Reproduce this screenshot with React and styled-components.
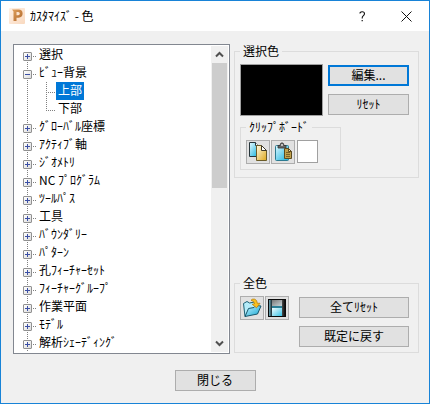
import React, { useState } from 'react';
import styled, { createGlobalStyle, css } from 'styled-components';

const GlobalStyle = createGlobalStyle`
  * {
    box-sizing: border-box;
  }
  body {
    margin: 0;
    background: #f0f0f0;
  }
  body, button {
    font-family: "Noto Sans CJK JP", "Noto Sans", sans-serif;
    font-size: 12px;
    color: #000;
  }
`;

const Dialog = styled.div`
  display: flex;
  flex-direction: column;
  min-height: 100vh;
  border: 1px solid #1883d7;
  background: #f0f0f0;
`;

const TitleBar = styled.header`
  display: flex;
  align-items: center;
  height: 30px;
  padding: 0 2px 0 8px;
  background: #fff;
`;

const Title = styled.h1`
  flex: 1;
  margin: 0 0 0 5px;
  font-size: 12px;
  font-weight: 400;
  line-height: 18px;
`;

const TitleButton = styled.button`
  display: flex;
  align-items: center;
  justify-content: center;
  width: 46px;
  height: 28px;
  padding: 0;
  border: none;
  background: transparent;

  &:last-child {
    width: 42px;
  }
  &:hover {
    background: #e5e5e5;
  }
`;

const Body = styled.main`
  display: grid;
  grid-template-columns: minmax(0, 217fr) minmax(185px, 185fr);
  column-gap: 4px;
  padding: 13px 10px 0 12px;
`;

const TreePanel = styled.div`
  display: flex;
  padding: 1px;
  border: 1px solid #828790;
  background: #fff;
`;

const TreeList = styled.ul`
  flex: 1;
  margin: 0;
  padding: 0 0 0 8px;
  list-style: none;
`;

const rail = css`
  background-image:
    repeating-linear-gradient(to bottom, #808080 0 1px, transparent 1px 2px),
    repeating-linear-gradient(to right, #808080 0 1px, transparent 1px 2px);
  background-repeat: no-repeat;
  background-position: 4px ${props => (props.$first ? '10px' : '0')}, 4px 10px;
  background-size: 1px ${props => (props.$last ? '10px' : '18px')}, 9px 1px;
`;

const ChildList = styled.ul`
  margin: 0;
  padding: 0 0 0 19px;
  list-style: none;
  background: repeating-linear-gradient(to bottom, #808080 0 1px, transparent 1px 2px) 4px 0 / 1px 100% no-repeat;
`;

const Row = styled.div`
  display: flex;
  height: 18px;
`;

const Branch = styled.span`
  width: 14px;
  height: 18px;
  padding-top: 6px;
  ${rail}
`;

const Expander = styled.button`
  display: block;
  width: 9px;
  height: 9px;
  padding: 0;
  border: 1px solid #919191;
  border-radius: 1px;
  background:
    linear-gradient(#3b4fa5, #3b4fa5) center / 5px 1px no-repeat,
    ${props => (props.$open ? '' : 'linear-gradient(#3b4fa5, #3b4fa5) center / 1px 5px no-repeat,')}
    linear-gradient(135deg, #fff, #dcdcdc);
`;

const Label = styled.span`
  padding: 0 2px 2px;
  line-height: 16px;
  white-space: nowrap;
  cursor: default;
  color: ${props => (props.$selected ? '#fff' : '#000')};
  background: ${props => (props.$selected ? '#0078d7' : 'transparent')};
`;

const ScrollBar = styled.div`
  display: flex;
  flex-direction: column;
  width: 17px;
  background: #f0f0f0;
`;

const ScrollButton = styled.button`
  display: flex;
  align-items: center;
  justify-content: center;
  height: 17px;
  padding: 0;
  border: none;
  background: transparent;
`;

const Track = styled.div`
  flex: 1;
`;

const Thumb = styled.div`
  width: 15px;
  height: 46%;
  margin: 0 1px;
  background: #cdcdcd;
`;

const Side = styled.div`
  display: flex;
  flex-direction: column;
  justify-content: space-between;
  padding-bottom: 1px;
`;

const Group = styled.fieldset`
  min-width: 0;
  margin: 0;
  padding: 6px ${props => (props.$inner ? '5px' : '9px')} 5px 5px;
  border: 1px solid #dcdcdc;
`;

const Legend = styled.legend`
  padding: 0 3px;
  line-height: 14px;
`;

const SelectedGrid = styled.div`
  display: grid;
  grid-template-columns: 83fr 81fr;
  column-gap: 5px;
`;

const Swatch = styled.div`
  height: 52px;
  border: 1px solid #a0a0a0;
  background: #000;
`;

const Stack = styled.div`
  display: flex;
  flex: 1;
  flex-direction: column;
  gap: 8px;
  padding-top: 1px;
`;

const PushButton = styled.button`
  height: 21px;
  padding: 0 8px 2px;
  border: ${props => (props.$primary ? '2px solid #0078d7' : '1px solid #adadad')};
  background: #e1e1e1;
  line-height: 16px;
  white-space: nowrap;

  &:hover {
    background: #e5f1fb;
  }
`;

const ClipboardRow = styled.div`
  display: flex;
  width: 101px;
  margin: 4px 0 2px;

  ${Group} {
    flex: 1;
  }
`;

const Tools = styled.div`
  display: flex;
  gap: 1px;
`;

const IconButton = styled.button`
  display: flex;
  align-items: center;
  justify-content: center;
  width: 24px;
  height: 24px;
  padding: 0;
  border: 1px solid #adadad;
  background: #e1e1e1;
`;

const ClipSwatch = styled.div`
  width: 21px;
  height: 23px;
  margin-left: 1px;
  border: 1px solid #a0a0a0;
  background: #fff;
`;

const AllColours = styled.div`
  display: flex;
  gap: 10px;
`;

const Footer = styled.footer`
  display: flex;
  justify-content: center;
  padding: 16px 0 12px;

  ${PushButton} {
    width: 81px;
  }
`;

const AppIcon = () => (
  <svg width="16" height="16" viewBox="0 0 16 16" aria-hidden="true">
    <defs>
      <linearGradient id="appBack" x1="0" y1="0" x2="1" y2="1">
        <stop offset="0" stopColor="#fff1e6" />
        <stop offset="1" stopColor="#f9d9bf" />
      </linearGradient>
      <linearGradient id="appMark" x1="0" y1="0" x2="1" y2="1">
        <stop offset="0" stopColor="#e0a05c" />
        <stop offset="1" stopColor="#b0682c" />
      </linearGradient>
    </defs>
    <rect width="16" height="16" rx="1" fill="url(#appBack)" />
    <path d="M3 1.5h6.5a4 4 0 0 1 0 8.2H7.5V13h-3V3.5z" fill="url(#appMark)" />
    <path d="M7.5 4h1.7a1.6 1.6 0 0 1 0 3.2H7.500z" fill="#fbe3cf" />
  </svg>
);

const CloseIcon = () => (
  <svg width="11" height="11" viewBox="0 0 11 11" aria-hidden="true">
    <path d="M.5.5l10 10M10.5.5l-10 10" stroke="#111" fill="none" />
  </svg>
);

const HelpIcon = () => (
  <svg width="7" height="11" viewBox="0 0 7 11" aria-hidden="true">
    <path d="M1 2.6V1.8Q1.8.8 3.2.8q2.3 0 2.3 2 0 1.1-1.3 2.1-1 .8-1 2.1v.4" stroke="#111" strokeWidth="1.1" fill="none" />
    <path d="M2.6 9h1.2v1.2H2.6z" fill="#111" />
  </svg>
);

const Chevron = ({ down }) => (
  <svg width="9" height="7" viewBox="0 0 9 7" aria-hidden="true">
    <path d={down ? 'M1 1.5l3.5 3.5L8 1.5' : 'M1 5.5L4.5 2 8 5.5'} stroke="#505050" strokeWidth="2" fill="none" />
  </svg>
);

const CopyIcon = () => (
  <svg width="20" height="20" viewBox="0 0 20 20" aria-hidden="true">
    <defs>
      <linearGradient id="pageBlue" x1="0" y1="0" x2="1" y2="1">
        <stop offset="0" stopColor="#e8fbff" />
        <stop offset="1" stopColor="#0fb0dc" />
      </linearGradient>
      <linearGradient id="pageGold" x1="0" y1="0" x2="1" y2="1">
        <stop offset="0" stopColor="#fffbe8" />
        <stop offset="1" stopColor="#dea81c" />
      </linearGradient>
    </defs>
    <path d="M1.5 .5h6l3 3v11h-9z" fill="url(#pageBlue)" stroke="#26343a" />
    <path d="M7.5 .5v3h3" fill="#fff" stroke="#26343a" />
    <path d="M8.5 3.5h5l5 5v10h-10z" fill="url(#pageGold)" stroke="#6b5c28" />
    <path d="M13.5 3.5v5h5z" fill="#fff" stroke="#3d3826" />
  </svg>
);

const PasteIcon = () => (
  <svg width="20" height="20" viewBox="0 0 20 20" aria-hidden="true">
    <defs>
      <linearGradient id="boardBlue" x1="0" y1="0" x2="1" y2="1">
        <stop offset="0" stopColor="#dcf8ff" />
        <stop offset="1" stopColor="#18b2de" />
      </linearGradient>
    </defs>
    <rect x="2.5" y="3.5" width="13" height="15" rx="1" fill="url(#boardBlue)" stroke="#2c7a90" />
    <path d="M5 6V3.5h2Q7.200 .8 9 .8t2 2.700h2V6z" fill="#666" stroke="#333" strokeWidth=".8" />
    <path d="M8 2.200h2v1.600H8z" fill="#ddd" />
    <path d="M11.5 6.5h4l3 3v7h-7z" fill="#c0a04c" stroke="#5a4a1f" />
    <path d="M13 10.5h4M13 12.5h4M13 14.5h4" stroke="#7a6329" />
    <path d="M15.5 6.5v3h3z" fill="#f2e3b3" stroke="#5a4a1f" />
  </svg>
);

const OpenIcon = () => (
  <svg width="20" height="20" viewBox="0 0 20 20" aria-hidden="true">
    <defs>
      <linearGradient id="folderBlue" x1="0" y1="0" x2="1" y2="1">
        <stop offset="0" stopColor="#c8f4ff" />
        <stop offset="1" stopColor="#0fa5d2" />
      </linearGradient>
    </defs>
    <path d="M3 18.500L1.500 5.500l3.500-2 2.500 1.500 5-1 2 5z" fill="#b5ecf9" stroke="#1c6075" />
    <path d="M3 18.500l3.500-8 5.500-1 2-2 5 .5-3.500 8z" fill="url(#folderBlue)" stroke="#17556a" />
    <path d="M9 2.200Q10.500.5 12.800 1.200 15.200 2 15.300 5.300H18l-3.500 4.500-4.300-3.500 2.400-.6Q12 2.800 9 2.200z" fill="#fbc01d" stroke="#b9820c" strokeWidth=".8" />
  </svg>
);

const SaveIcon = () => (
  <svg width="20" height="20" viewBox="0 0 20 20" aria-hidden="true">
    <defs>
      <linearGradient id="diskSide" x1="0" y1="0" x2="1" y2="0">
        <stop offset="0" stopColor="#7fc4d4" />
        <stop offset=".2" stopColor="#1c2a30" />
        <stop offset=".8" stopColor="#4a4a4a" />
        <stop offset="1" stopColor="#000" />
      </linearGradient>
      <linearGradient id="diskShutter" x1="0" y1="0" x2="1" y2="1">
        <stop offset="0" stopColor="#777" />
        <stop offset="1" stopColor="#c9d4d8" />
      </linearGradient>
      <linearGradient id="diskLabel" x1="0" y1="0" x2="1" y2="1">
        <stop offset="0" stopColor="#f2fdff" />
        <stop offset="1" stopColor="#38c3e6" />
      </linearGradient>
    </defs>
    <rect x="1.5" y="1.5" width="17" height="17" fill="url(#diskSide)" stroke="#0a0a0a" />
    <rect x="5" y="2" width="10" height="6" fill="url(#diskShutter)" />
    <rect x="5" y="8" width="10" height="2" fill="#2b7f96" />
    <rect x="5" y="10" width="10" height="8" fill="url(#diskLabel)" />
  </svg>
);

const nodes = [
  { name: '選択' },
  { name: 'ﾋﾞｭｰ背景', children: ['上部', '下部'] },
  { name: 'ｸﾞﾛｰﾊﾞﾙ座標' },
  { name: 'ｱｸﾃｨﾌﾞ軸' },
  { name: 'ｼﾞｵﾒﾄﾘ' },
  { name: 'NC ﾌﾟﾛｸﾞﾗﾑ' },
  { name: 'ﾂｰﾙﾊﾟｽ' },
  { name: '工具' },
  { name: 'ﾊﾞｳﾝﾀﾞﾘｰ' },
  { name: 'ﾊﾟﾀｰﾝ' },
  { name: '孔ﾌｨｰﾁｬｰｾｯﾄ' },
  { name: 'ﾌｨｰﾁｬｰｸﾞﾙｰﾌﾟ' },
  { name: '作業平面' },
  { name: 'ﾓﾃﾞﾙ' },
  { name: '解析ｼｪｰﾃﾞｨﾝｸﾞ' },
];

const ColourTree = () => {
  const [open, setOpen] = useState(true);
  const [selected, setSelected] = useState('上部');

  return (
    <TreePanel>
      <TreeList role="tree" aria-label="色の項目">
        {nodes.map((node, i) => {
          const expanded = Boolean(node.children) && open;
          return (
            <li key={node.name} role="treeitem" aria-expanded={expanded}>
              <Row>
                <Branch $first={i === 0}>
                  <Expander
                    type="button"
                    aria-label={node.name}
                    $open={expanded}
                    onClick={() => node.children && setOpen(!open)}
                  />
                </Branch>
                <Label $selected={selected === node.name} onClick={() => setSelected(node.name)}>
                  {node.name}
                </Label>
              </Row>
              {expanded && (
                <ChildList role="group">
                  {node.children.map((child, n) => (
                    <li key={child} role="treeitem" aria-selected={selected === child}>
                      <Row>
                        <Branch $last={n === node.children.length - 1} />
                        <Label $selected={selected === child} onClick={() => setSelected(child)}>
                          {child}
                        </Label>
                      </Row>
                    </li>
                  ))}
                </ChildList>
              )}
            </li>
          );
        })}
      </TreeList>
      <ScrollBar>
        <ScrollButton type="button" aria-label="上へ"><Chevron /></ScrollButton>
        <Track><Thumb /></Track>
        <ScrollButton type="button" aria-label="下へ"><Chevron down /></ScrollButton>
      </ScrollBar>
    </TreePanel>
  );
};

const App = () => (
  <>
    <GlobalStyle />
    <Dialog role="dialog" aria-labelledby="dialog-title">
      <TitleBar>
        <AppIcon />
        <Title id="dialog-title">ｶｽﾀﾏｲｽﾞ - 色</Title>
        <TitleButton type="button" aria-label="ヘルプ"><HelpIcon /></TitleButton>
        <TitleButton type="button" aria-label="閉じる"><CloseIcon /></TitleButton>
      </TitleBar>
      <Body>
        <ColourTree />
        <Side>
          <Group>
            <Legend>選択色</Legend>
            <SelectedGrid>
              <Swatch />
              <Stack>
                <PushButton type="button" $primary>編集...</PushButton>
                <PushButton type="button">ﾘｾｯﾄ</PushButton>
              </Stack>
            </SelectedGrid>
            <ClipboardRow>
              <Group $inner>
                <Legend>ｸﾘｯﾌﾟﾎﾞｰﾄﾞ</Legend>
                <Tools>
                  <IconButton type="button" aria-label="コピー"><CopyIcon /></IconButton>
                  <IconButton type="button" aria-label="貼り付け"><PasteIcon /></IconButton>
                  <ClipSwatch />
                </Tools>
              </Group>
            </ClipboardRow>
          </Group>
          <Group>
            <Legend>全色</Legend>
            <AllColours>
              <Tools>
                <IconButton type="button" aria-label="開く"><OpenIcon /></IconButton>
                <IconButton type="button" aria-label="保存"><SaveIcon /></IconButton>
              </Tools>
              <Stack>
                <PushButton type="button">全てﾘｾｯﾄ</PushButton>
                <PushButton type="button">既定に戻す</PushButton>
              </Stack>
            </AllColours>
          </Group>
        </Side>
      </Body>
      <Footer>
        <PushButton type="button">閉じる</PushButton>
      </Footer>
    </Dialog>
  </>
);

export default App;
